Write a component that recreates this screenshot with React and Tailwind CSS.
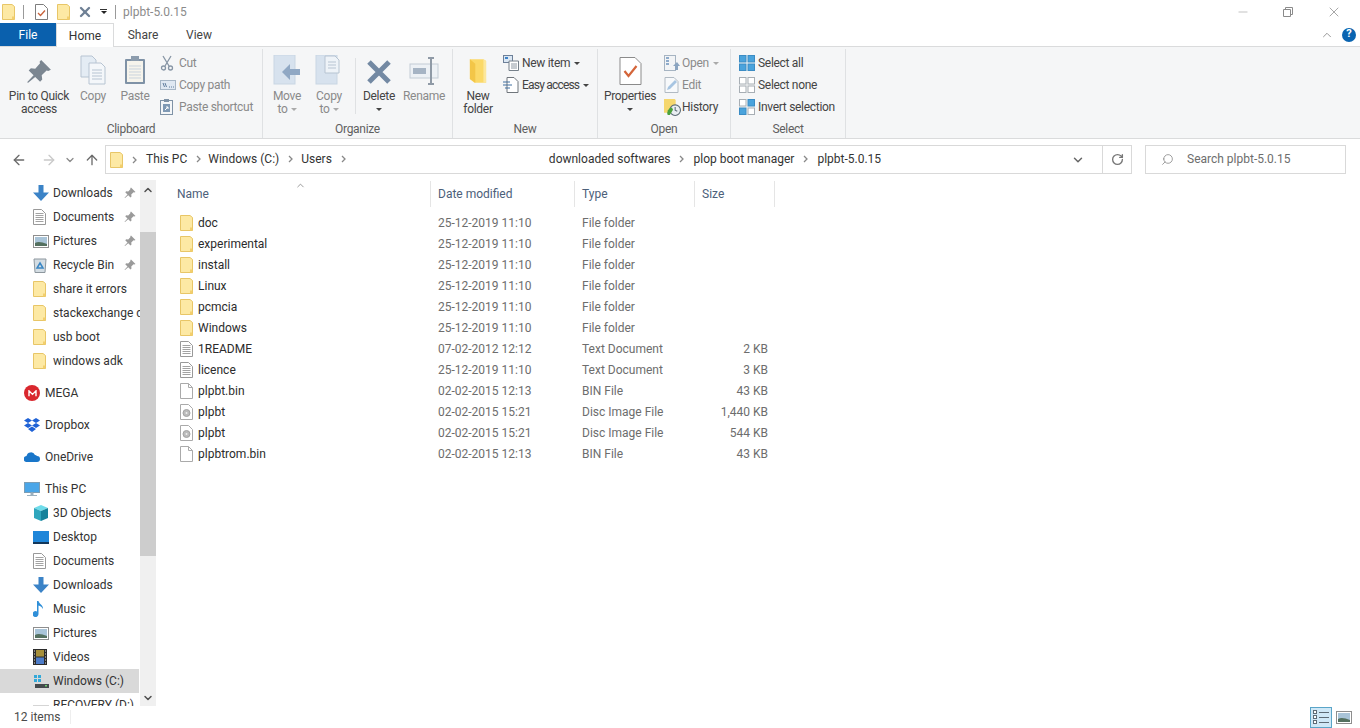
import { ArrowLeft, ArrowRight, ArrowUp, ChevronDown, ChevronUp, RotateCw, Search, Minus, X } from 'lucide-react';

function Folder({ className = 'w-[13px] h-4' }) {
    return (
        <svg viewBox="0 0 13 16" className={className}>
            <path d="M.5.5h9.500l2.500 2v13H.5z" fill="#fde9a4" stroke="#e8c667" />
            <path d="M10 12.500h2.500v3H10z" fill="#f3cf6d" />
        </svg>
    );
}

function DocLines({ className = 'w-[13px] h-4' }) {
    return (
        <svg viewBox="0 0 13 16" className={className} fill="none">
            <path d="M.5.5h8l4 4v11H.5z" fill="#fff" stroke="#999" />
            <path d="M2.500 4.500h8M2.500 6.500h8M2.500 8.500h8M2.500 10.500h8M2.500 12.500h8" stroke="#a3a3a3" />
        </svg>
    );
}

function DocBlank() {
    return (
        <svg viewBox="0 0 13 16" className="w-[13px] h-4" fill="none">
            <path d="M.5.5h8l4 4v11H.5z" fill="#fff" stroke="#aaa" />
            <path d="M8.500.5v4h4" stroke="#aaa" />
        </svg>
    );
}

function DocDisc() {
    return (
        <svg viewBox="0 0 13 16" className="w-[13px] h-4" fill="none">
            <path d="M.5.5h8l4 4v11H.5z" fill="#fff" stroke="#aaa" />
            <circle cx="6.500" cy="9" r="3.500" fill="#bbb" stroke="#a3a3a3" />
            <circle cx="6.500" cy="9" r="1" fill="#eee" />
        </svg>
    );
}

function Pin({ className = 'w-3 h-3', color = '#9a9a9a' }) {
    return (
        <svg viewBox="0 0 24 24" className={className}>
            <path d="M14 1l9 9-2.500 1-1.500-.5-4.500 4.500.5 4-2 2-4.500-4.500L2 22l-1-.5 6-6.500-4.500-4.500 2-2 4 .5L13 4l-.5-1.500z" fill={color} />
        </svg>
    );
}

function DownArrow({ className = 'w-[16px] h-[16px]' }) {
    return (
        <svg viewBox="0 0 16 16" className={className}>
            <path d="M5.500 0h5v7.500H16L8 16 0 7.500h5.500z" fill="#3b83c7" />
        </svg>
    );
}

function PicturesIcon() {
    return (
        <svg viewBox="0 0 16 13" className="w-4 h-[13px]">
            <rect x=".5" y=".5" width="15" height="12" fill="#fff" stroke="#8e8e8e" />
            <rect x="2" y="2" width="12" height="9" fill="#a9c4d8" />
            <path d="M2 8c3-2 7-1 12 1v2H2z" fill="#54705f" />
        </svg>
    );
}

function RecycleIcon() {
    return (
        <svg viewBox="0 0 14 16" className="w-[14px] h-4">
            <path d="M1 2h12l-1 13.500H2z" fill="#d4dde3" stroke="#8d979e" />
            <path d="M7 6l3 5H4z" fill="none" stroke="#3a86c4" strokeWidth="1.500" />
        </svg>
    );
}

function MegaIcon() {
    return (
        <span className="w-4 h-4 rounded-full bg-[#d9272e] flex items-center justify-center">
            <svg viewBox="0 0 10 8" className="w-[9px] h-[7px]" fill="none">
                <path d="M1 7V1l4 4 4-4v6" stroke="#fff" strokeWidth="1.600" />
            </svg>
        </span>
    );
}

function DropboxIcon() {
    return (
        <svg viewBox="0 0 16 15" className="w-4 h-[15px]" fill="#1f62d6">
            <path d="M4 0l4 2.500L4 5 0 2.500zM12 0l4 2.500L12 5 8 2.500zM4 5l4 2.500L4 10 0 7.500zM12 5l4 2.500L12 10 8 7.500zM8 8.500l4 2.500-4 3-4-3z" />
        </svg>
    );
}

function CloudIcon() {
    return (
        <svg viewBox="0 0 16 10" className="w-4 h-[10px]">
            <path d="M3 10a3 3 0 0 1-.500-6A4.500 4.500 0 0 1 11 3a3.500 3.500 0 0 1 2 1A3 3 0 0 1 13 10z" fill="#1976c9" />
        </svg>
    );
}

function MonitorIcon() {
    return (
        <svg viewBox="0 0 16 15" className="w-4 h-[15px]">
            <rect x=".5" y=".5" width="15" height="10" fill="#4aa6e8" stroke="#7b9db5" />
            <path d="M7 11h2v2H7zM3 13.500h10" stroke="#9bb0be" fill="#9bb0be" />
        </svg>
    );
}

function CubeIcon() {
    return (
        <svg viewBox="0 0 16 16" className="w-4 h-4">
            <path d="M8 0l7 3-7 3-7-3z" fill="#6fdcea" />
            <path d="M1 3l7 3v10l-7-3z" fill="#2fa6bd" />
            <path d="M15 3L8 6v10l7-3z" fill="#16829b" />
        </svg>
    );
}

function DesktopIcon() {
    return (
        <svg viewBox="0 0 16 13" className="w-4 h-[13px]">
            <rect width="16" height="13" fill="#1f86d9" />
            <rect y="11" width="16" height="2" fill="#13375a" />
        </svg>
    );
}

function MusicIcon() {
    return (
        <svg viewBox="0 0 12 16" className="w-3 h-4">
            <path d="M4 0h1.500c.5 3 5 4 4.500 8-1-2-2.500-3-4.500-3.500V13a3 3 0 1 1-1.500-2.500z" fill="#2f8fd8" />
        </svg>
    );
}

function VideoIcon() {
    return (
        <svg viewBox="0 0 14 16" className="w-[14px] h-4">
            <rect width="14" height="16" fill="#2b2b2b" />
            <rect x="3" y="1" width="8" height="6.500" fill="#a68f3a" />
            <rect x="3" y="8.500" width="8" height="6.500" fill="#4d7cc9" />
            <path d="M1 2h1M1 5h1M1 8h1M1 11h1M1 14h1M12 2h1M12 5h1M12 8h1M12 11h1M12 14h1" stroke="#ddd" />
        </svg>
    );
}

function DriveIcon() {
    return (
        <svg viewBox="0 0 16 14" className="w-4 h-[14px]">
            <path d="M1 1h3v3H1zM5 1h3v3H5zM1 5h3v3H1zM5 5h3v3H5z" fill="#33a9d9" />
            <rect x="2" y="10" width="14" height="4" fill="#454a4d" />
            <rect x="12" y="11" width="2" height="1.500" fill="#6ed06e" />
        </svg>
    );
}

function PlainDriveIcon() {
    return (
        <svg viewBox="0 0 16 14" className="w-4 h-[14px]">
            <rect x="0" y="7" width="16" height="1" fill="#d5d5d5" />
            <rect x="0" y="8" width="16" height="6" fill="#e8e8e8" />
        </svg>
    );
}

function TitleDoc() {
    return (
        <svg viewBox="0 0 13 16" className="w-[13px] h-4" fill="none">
            <path d="M.5.5h8l4 4v11H.5z" fill="#fff" stroke="#7d7d7d" />
            <path d="M3 9l2.500 2.500L10 6.500" stroke="#c8623a" strokeWidth="1.300" />
        </svg>
    );
}

function CopyIcon() {
    return (
        <svg viewBox="0 0 26 30" className="w-[26px] h-[30px]">
            <path d="M1 1h11l4 4v17H1z" fill="#e4ecf4" stroke="#b7c4d2" />
            <path d="M9 8h12l4 4v17H9z" fill="#f4f7fa" stroke="#b7c4d2" />
            <path d="M12 15h10M12 18h10M12 21h10M12 24h10" stroke="#b7c4d2" />
        </svg>
    );
}

function PasteIcon() {
    return (
        <svg viewBox="0 0 22 30" className="w-[22px] h-[30px]">
            <rect x="1" y="4" width="20" height="25" fill="#7f92a6" rx="1" />
            <rect x="3" y="6" width="16" height="21" fill="#f6f4ec" />
            <path d="M5 11h12M5 14h12M5 17h12M5 20h12M5 23h12" stroke="#c9d3dd" />
            <rect x="7" y="1" width="8" height="5" fill="#8c9cad" />
        </svg>
    );
}

function MoveIcon({ copy }) {
    return (
        <svg viewBox="0 0 28 30" className="w-[28px] h-[30px]">
            <rect x="1" y="0" width="21" height="29" fill="#d7e2ee" stroke="#c9d6e3" />
            {copy ? (
                <g>
                    <path d="M10 1h10l4 4v13H10z" fill="#eef3f8" stroke="#b7c4d2" />
                    <path d="M13 7h8M13 10h8M13 13h8" stroke="#b7c4d2" />
                </g>
            ) : (
                <path d="M27 14H17V9l-8 8 8 8v-5h10z" fill="#90a8c4" />
            )}
        </svg>
    );
}

function BigX() {
    return (
        <svg viewBox="0 0 26 26" className="w-[26px] h-[26px]">
            <path d="M3 3l20 20M23 3L3 23" stroke="#7389a3" strokeWidth="5" />
        </svg>
    );
}

function RenameIcon() {
    return (
        <svg viewBox="0 0 30 28" className="w-[30px] h-7">
            <rect x="1" y="7" width="28" height="14" fill="#edf1f5" stroke="#c3ccd5" />
            <rect x="4" y="11" width="13" height="6" fill="#a6b4c4" />
            <path d="M19 1h6M22 1v26M19 27h6" stroke="#8f9aa6" strokeWidth="2" />
        </svg>
    );
}

function SmallCut() {
    return (
        <svg viewBox="0 0 14 16" className="w-[14px] h-4" fill="none" stroke="#8795a5" strokeWidth="1.300">
            <path d="M3 1l6 10M11 1L5 11" />
            <circle cx="3.500" cy="13" r="2" />
            <circle cx="10.500" cy="13" r="2" />
        </svg>
    );
}

function SmallPath() {
    return (
        <svg viewBox="0 0 16 10" className="w-4 h-[10px]">
            <rect x=".5" y=".5" width="15" height="9" fill="#dfe8f2" stroke="#a6b6c6" />
            <path d="M3 3l1.500 4M5 3l1.500 4" stroke="#5f7d9d" />
            <path d="M9 7h1M11 7h1M13 7h1" stroke="#5f7d9d" />
        </svg>
    );
}

function SmallPasteShortcut() {
    return (
        <svg viewBox="0 0 13 16" className="w-[13px] h-4">
            <rect x=".5" y="1.500" width="12" height="14" fill="#f4f6f8" stroke="#7f92a6" />
            <rect x="4" y="0" width="5" height="3" fill="#7f92a6" />
            <rect x="3" y="5" width="7" height="8" fill="#7f99b4" />
            <path d="M5 11l3-3M6 8h2v2" stroke="#fff" fill="none" />
        </svg>
    );
}

function NewFolderIcon() {
    return (
        <svg viewBox="0 0 20 28" className="w-[18px] h-7">
            <path d="M1 1h15l3 2v24H6l-5-4z" fill="#fbd968" />
            <path d="M1 1l6 5v21l-6-4z" fill="#f3c648" />
            <path d="M16 1l3 2v24h-3z" fill="#fce79c" />
        </svg>
    );
}

function NewItemIcon() {
    return (
        <svg viewBox="0 0 16 16" className="w-4 h-4">
            <rect x=".5" y=".5" width="9" height="7" fill="#dbe7f3" stroke="#6d8099" />
            <rect x="2" y="2" width="3" height="2" fill="#3f83c8" />
            <path d="M6 6h9.500v9.500H6z" fill="#fff" stroke="#76808a" />
            <path d="M8 9h6M8 11h6M8 13h6" stroke="#8e98a2" />
        </svg>
    );
}

function EasyAccessIcon() {
    return (
        <svg viewBox="0 0 16 16" className="w-4 h-4" fill="none">
            <path d="M4 .5h7l4 4v11H4z" fill="#fff" stroke="#70767c" />
            <path d="M0 5h7M0 8h9M2 11h5" stroke="#3f6f9f" />
        </svg>
    );
}

function PropertiesIcon() {
    return (
        <svg viewBox="0 0 22 28" className="w-[23px] h-7" fill="none">
            <path d="M.5.5h15l6 6v21H.5z" fill="#fff" stroke="#8b8b8b" />
            <path d="M5 14l4 5 8-10" stroke="#d4653a" strokeWidth="2.200" />
        </svg>
    );
}

function OpenIcon() {
    return (
        <svg viewBox="0 0 16 16" className="w-4 h-4">
            <rect x=".5" y=".5" width="11" height="15" fill="#f2f4f6" stroke="#a6b4c2" />
            <path d="M2 3h3M2 6h3M2 9h3" stroke="#6d93bd" strokeWidth="1.500" />
            <path d="M13 7l3 4h-2v4h-3v-4H9z" fill="#8aa4c0" />
        </svg>
    );
}

function EditIcon() {
    return (
        <svg viewBox="0 0 16 16" className="w-4 h-4">
            <path d="M1 .5h9l4 4v11H1z" fill="#f7f9fb" stroke="#b1bac3" />
            <path d="M3 13l1-3 7-7 2 2-7 7z" fill="#a7c5e2" />
        </svg>
    );
}

function HistoryIcon() {
    return (
        <svg viewBox="0 0 16 16" className="w-[17px] h-[17px]">
            <path d="M0 0h10l1 1v12H0z" fill="#f5d76e" />
            <circle cx="10.500" cy="10.500" r="5" fill="#e9eef2" stroke="#5a6a74" />
            <path d="M10.500 7.500v3l2 1" stroke="#5a6a74" fill="none" />
            <path d="M3.500 15a5 5 0 0 1 4-7l1 2-3 5z" fill="#4aa13c" />
        </svg>
    );
}

function SelectIcon({ on }) {
    // on: which cells of the 2x2 grid are filled blue
    const cells = [[0, 0], [8.5, 0], [0, 8.5], [8.5, 8.5]];
    return (
        <svg viewBox="0 0 16 16" className="w-4 h-4">
            {cells.map(([x, y], i) => (
                <rect key={i} x={x + 0.5} y={y + 0.5} width="6.500" height="6.500" fill={on[i] ? '#4aa3dc' : '#fff'} stroke={on[i] ? '#3b8cc4' : '#a7aeb4'} />
            ))}
        </svg>
    );
}

function Caret({ color = '#444' }) {
    return (
        <svg viewBox="0 0 6 3" className="w-[6px] h-[3px]">
            <path d="M0 0h6L3 3z" fill={color} />
        </svg>
    );
}

function BigButton({ icon, label, sub, caret, width, muted }) {
    return (
        <div className={`flex flex-col items-center shrink-0 ${width}`}>
            <div className="h-[33px] flex items-end justify-center">{icon}</div>
            <span className={`mt-[5px] leading-[13px] whitespace-nowrap ${muted ? 'text-[#8a8a8a]' : 'text-[#444]'}`}>{label}</span>
            {sub && (
                <span className={`leading-[13px] whitespace-nowrap flex items-center gap-[3px] ${muted ? 'text-[#8a8a8a]' : 'text-[#444]'}`}>
                    {sub}
                    {caret && <Caret color="#aaa" />}
                </span>
            )}
            {!sub && caret && (
                <span className="h-[13px] flex items-center">
                    <Caret />
                </span>
            )}
        </div>
    );
}

function SmallButton({ icon, label, muted, caret, iconW = 'w-[19px]' }) {
    return (
        <div className={`h-[22px] flex items-center whitespace-nowrap ${muted ? 'text-[#8a8a8a]' : 'text-[#444]'}`}>
            <span className={`${iconW} flex justify-start`}>{icon}</span>
            {label}
            {caret && (
                <span className="ml-[4px]">
                    <Caret color={muted ? '#aaa' : '#444'} />
                </span>
            )}
        </div>
    );
}

function RibbonGroup({ title, width, children }) {
    return (
        <div className={`${width} shrink-0 h-full flex flex-col border-r border-[#dfe1e3]`}>
            <div className="flex-1 flex pt-[3px] min-h-0">{children}</div>
            <div className="h-[17px] text-center leading-[17px] text-[#5f5f5f]">{title}</div>
        </div>
    );
}

const navTop = [
    { icon: <DownArrow />, label: 'Downloads', pin: true },
    { icon: <DocLines />, label: 'Documents', pin: true },
    { icon: <PicturesIcon />, label: 'Pictures', pin: true },
    { icon: <RecycleIcon />, label: 'Recycle Bin', pin: true },
    { icon: <Folder />, label: 'share it errors' },
    { icon: <Folder />, label: 'stackexchange downloads' },
    { icon: <Folder />, label: 'usb boot' },
    { icon: <Folder />, label: 'windows adk' },
];

const navPc = [
    { icon: <CubeIcon />, label: '3D Objects' },
    { icon: <DesktopIcon />, label: 'Desktop' },
    { icon: <DocLines />, label: 'Documents' },
    { icon: <DownArrow />, label: 'Downloads' },
    { icon: <MusicIcon />, label: 'Music' },
    { icon: <PicturesIcon />, label: 'Pictures' },
    { icon: <VideoIcon />, label: 'Videos' },
    { icon: <DriveIcon />, label: 'Windows (C:)', selected: true },
    { icon: <PlainDriveIcon />, label: 'RECOVERY (D:)' },
];

const files = [
    ['folder', 'doc', '25-12-2019 11:10', 'File folder', ''],
    ['folder', 'experimental', '25-12-2019 11:10', 'File folder', ''],
    ['folder', 'install', '25-12-2019 11:10', 'File folder', ''],
    ['folder', 'Linux', '25-12-2019 11:10', 'File folder', ''],
    ['folder', 'pcmcia', '25-12-2019 11:10', 'File folder', ''],
    ['folder', 'Windows', '25-12-2019 11:10', 'File folder', ''],
    ['text', '1README', '07-02-2012 12:12', 'Text Document', '2 KB'],
    ['text', 'licence', '25-12-2019 11:10', 'Text Document', '3 KB'],
    ['blank', 'plpbt.bin', '02-02-2015 12:13', 'BIN File', '43 KB'],
    ['disc', 'plpbt', '02-02-2015 15:21', 'Disc Image File', '1,440 KB'],
    ['disc', 'plpbt', '02-02-2015 15:21', 'Disc Image File', '544 KB'],
    ['blank', 'plpbtrom.bin', '02-02-2015 12:13', 'BIN File', '43 KB'],
];

function FileIcon({ kind }) {
    if (kind === 'folder') return <Folder />;
    if (kind === 'text') return <DocLines />;
    if (kind === 'disc') return <DocDisc />;
    return <DocBlank />;
}

function NavRow({ item }) {
    return (
        <div className={`h-6 shrink-0 flex items-center pl-[33px] ${item.selected ? 'bg-[#d9d9d9] mr-px' : ''}`}>
            <span className="w-[20px] shrink-0 flex">{item.icon}</span>
            <span className="whitespace-nowrap overflow-hidden flex-1 text-[#333]">{item.label}</span>
            {item.pin && (
                <span className="w-[16px] shrink-0">
                    <Pin />
                </span>
            )}
        </div>
    );
}

function NavTop({ icon, label }) {
    return (
        <div className="h-6 shrink-0 flex items-center pl-[24px]">
            <span className="w-[21px] shrink-0 flex">{icon}</span>
            <span className="text-[#333]">{label}</span>
        </div>
    );
}

function Crumb({ label, className = '' }) {
    return (
        <span className={`flex items-center ${className}`}>
            <span className="text-[#333]">{label}</span>
            <svg viewBox="0 0 5 8" className="w-[5px] h-2 mx-[9px]" fill="none">
                <path d="M1 1l3 3-3 3" stroke="#888" strokeWidth="1.300" />
            </svg>
        </span>
    );
}

export default function App() {
    return (
        <div className="w-[1360px] h-[728px] overflow-hidden bg-white flex flex-col text-[12px] font-['Roboto','Liberation_Sans',sans-serif]">
            {/* Title bar */}
            <div className="h-[23px] shrink-0 flex items-center pl-[2px] relative">
                <Folder />
                <span className="w-px h-[14px] bg-[#9a9a9a] ml-[8px]" />
                <span className="ml-[11px]">
                    <TitleDoc />
                </span>
                <span className="ml-[9px]">
                    <Folder />
                </span>
                <X className="ml-[7px] w-4 h-4 text-[#6f8095]" strokeWidth={3.5} />
                <span className="ml-[7px] flex flex-col items-center gap-[1px]">
                    <span className="w-[7px] h-px bg-[#333]" />
                    <Caret color="#222" />
                </span>
                <span className="w-px h-[14px] bg-[#9a9a9a] ml-[8px]" />
                <span className="ml-[7px] text-[#8b8b8b]">plpbt-5.0.15</span>
                <span className="ml-auto flex items-center">
                    <Minus className="w-[14px] h-[14px] text-[#9a9a9a]" strokeWidth={1} />
                    <svg viewBox="0 0 10 10" className="w-[10px] h-[10px] ml-[33px]" fill="none" stroke="#8a8a8a">
                        <path d="M2.500 2.500V.5h7v7h-2M.5 2.500h7v7h-7z" />
                    </svg>
                    <X className="w-[16px] h-[16px] ml-[33px] mr-[18px] text-[#7a7a7a]" strokeWidth={1} />
                </span>
            </div>

            {/* Tabs */}
            <div className="h-[24px] shrink-0 flex items-stretch border-b border-[#dadbdc] relative">
                <div className="w-[56px] h-[23px] bg-[#0a60ad] text-white flex items-center justify-center">File</div>
                <div className="w-[58px] h-[24px] bg-white border-x border-t border-[#dadbdc] flex items-center justify-center text-[#333]">Home</div>
                <div className="w-[58px] flex items-center justify-center text-[#444]">Share</div>
                <div className="w-[54px] flex items-center justify-center text-[#444]">View</div>
                <div className="ml-auto flex items-center pr-[4px]">
                    <ChevronUp className="w-[14px] h-[14px] text-[#8a8a8a]" strokeWidth={1.5} />
                    <span className="ml-[8px] w-[14px] h-[14px] rounded-full bg-[#0a64b0] text-white flex items-center justify-center text-[11px] font-bold">?</span>
                </div>
            </div>

            {/* Ribbon */}
            <div className="h-[92px] shrink-0 bg-[#f5f6f7] border-b border-[#dadbdc] flex pt-[2px] tracking-[-0.3px]">
                <RibbonGroup title="Clipboard" width="w-[263px]">
                    <div className="w-[5px]" />
                    <BigButton width="w-[68px]" icon={<Pin className="w-[26px] h-[26px]" color="#7b8691" />} label="Pin to Quick" sub="access" />
                    <BigButton width="w-[40px]" icon={<CopyIcon />} label="Copy" muted />
                    <div className="w-[2px]" />
                    <BigButton width="w-[40px]" icon={<PasteIcon />} label="Paste" muted />
                    <div className="ml-[5px] flex flex-col">
                        <SmallButton icon={<SmallCut />} label="Cut" muted />
                        <SmallButton icon={<SmallPath />} label="Copy path" muted />
                        <SmallButton icon={<SmallPasteShortcut />} label="Paste shortcut" muted />
                    </div>
                </RibbonGroup>
                <RibbonGroup title="Organize" width="w-[190px]">
                    <div className="w-[3px]" />
                    <BigButton width="w-[42px]" icon={<MoveIcon />} label="Move" sub="to" caret muted />
                    <BigButton width="w-[42px]" icon={<MoveIcon copy />} label="Copy" sub="to" caret muted />
                    <span className="w-px h-[56px] bg-[#dfe1e3] ml-[5px] mt-[6px]" />
                    <BigButton width="w-[46px]" icon={<BigX />} label="Delete" caret />
                    <BigButton width="w-[44px]" icon={<RenameIcon />} label="Rename" muted />
                </RibbonGroup>
                <RibbonGroup title="New" width="w-[145px]">
                    <BigButton width="w-[50px]" icon={<NewFolderIcon />} label="New" sub="folder" />
                    <div className="flex flex-col">
                        <SmallButton icon={<NewItemIcon />} label="New item" caret />
                        <SmallButton icon={<EasyAccessIcon />} label={<span className="tracking-[-0.8px]">Easy access</span>} caret />
                    </div>
                </RibbonGroup>
                <RibbonGroup title="Open" width="w-[133px]">
                    <BigButton width="w-[64px]" icon={<PropertiesIcon />} label="Properties" caret />
                    <div className="ml-[2px] flex flex-col">
                        <SmallButton icon={<OpenIcon />} label="Open" muted caret iconW="w-[18px]" />
                        <SmallButton icon={<EditIcon />} label="Edit" muted iconW="w-[18px]" />
                        <SmallButton icon={<HistoryIcon />} label="History" iconW="w-[18px]" />
                    </div>
                </RibbonGroup>
                <RibbonGroup title="Select" width="w-[115px]">
                    <div className="pl-[8px] flex flex-col">
                        <SmallButton icon={<SelectIcon on={[1, 1, 1, 1]} />} label="Select all" />
                        <SmallButton icon={<SelectIcon on={[0, 0, 0, 0]} />} label="Select none" />
                        <SmallButton icon={<SelectIcon on={[0, 1, 1, 0]} />} label="Invert selection" />
                    </div>
                </RibbonGroup>
            </div>

            {/* Address bar */}
            <div className="h-[41px] shrink-0 flex items-center">
                <ArrowLeft className="ml-[11px] w-4 h-4 text-[#6b6b6b]" strokeWidth={2} />
                <ArrowRight className="ml-[14px] w-4 h-4 text-[#c9c9c9]" strokeWidth={2} />
                <ChevronDown className="ml-[7px] w-[12px] h-[12px] text-[#8a8a8a]" strokeWidth={2.5} />
                <ArrowUp className="ml-[8px] w-4 h-4 text-[#6b6b6b]" strokeWidth={2} />
                <div className="ml-[5px] w-[1027px] h-[29px] border border-[#d9d9d9] flex items-center pl-[4px]">
                    <Folder />
                    <svg viewBox="0 0 5 8" className="w-[5px] h-2 ml-[9px] mr-[9px]" fill="none">
                        <path d="M1 1l3 3-3 3" stroke="#888" strokeWidth="1.300" />
                    </svg>
                    <span className="flex items-center pb-[2px]">
                        <Crumb label="This PC" />
                        <Crumb label="Windows (C:)" className="-ml-[2px]" />
                        <Crumb label="Users" className="-ml-[1px]" />
                        <Crumb label="downloaded softwares" className="ml-[194px]" />
                        <Crumb label="plop boot manager" />
                        <span className="text-[#333]">plpbt-5.0.15</span>
                    </span>
                    <span className="ml-auto w-[30px] h-full flex items-center justify-start">
                        <ChevronDown className="w-[14px] h-[14px] text-[#666] -ml-[1px]" strokeWidth={2.5} />
                    </span>
                    <span className="w-[29px] h-full border-l border-[#d9d9d9] flex items-center justify-center">
                        <RotateCw className="w-[13px] h-[13px] text-[#777]" strokeWidth={2.5} />
                    </span>
                </div>
                <div className="ml-[13px] w-[201px] h-[29px] border border-[#d9d9d9] flex items-center pl-[15px] text-[#6d6d6d]">
                    <Search className="w-[13px] h-[13px] text-[#8a8a8a] -scale-x-100" strokeWidth={1.5} />
                    <span className="ml-[13px] pb-[2px]">Search plpbt-5.0.15</span>
                </div>
            </div>

            {/* Nav pane and file list */}
            <div className="flex-1 min-h-0 flex">
                <div className="w-[140px] shrink-0 flex flex-col overflow-hidden pt-px">
                    {navTop.map((item) => (
                        <NavRow key={item.label} item={item} />
                    ))}
                    <div className="h-2 shrink-0" />
                    <NavTop icon={<MegaIcon />} label="MEGA" />
                    <div className="h-2 shrink-0" />
                    <NavTop icon={<DropboxIcon />} label="Dropbox" />
                    <div className="h-2 shrink-0" />
                    <NavTop icon={<CloudIcon />} label="OneDrive" />
                    <div className="h-2 shrink-0" />
                    <NavTop icon={<MonitorIcon />} label="This PC" />
                    {navPc.map((item) => (
                        <NavRow key={item.label} item={item} />
                    ))}
                </div>

                {/* Scrollbar */}
                <div className="w-[16px] shrink-0 bg-[#f0f0f0] flex flex-col items-center">
                    <div className="h-[17px] mt-px shrink-0 flex items-center justify-center">
                        <ChevronUp className="w-[12px] h-[12px] text-[#505050]" strokeWidth={3} />
                    </div>
                    <div className="h-[34px] shrink-0" />
                    <div className="w-full h-[324px] shrink-0 bg-[#cdcdcd]" />
                    <div className="flex-1" />
                    <div className="h-[17px] shrink-0 flex items-center justify-center">
                        <ChevronDown className="w-[12px] h-[12px] text-[#505050]" strokeWidth={3} />
                    </div>
                </div>

                <div className="flex-1 min-w-0 pl-[15px] relative">
                    <ChevronUp className="absolute left-[139px] top-0 w-[11px] h-[11px] text-[#6f6f6f]" strokeWidth={1.5} />
                    <div className="flex h-[26px] text-[#4c607a] items-center mt-[1px]">
                        <div className="w-[260px] h-full flex items-center pl-[6px] border-r border-[#e5e5e5]">Name</div>
                        <div className="w-[144px] h-full flex items-center pl-[7px] border-r border-[#e5e5e5]">Date modified</div>
                        <div className="w-[120px] h-[26px] flex items-center pl-[7px] border-r border-[#e5e5e5]">Type</div>
                        <div className="w-[80px] h-full flex items-center pl-[7px] border-r border-[#e5e5e5]">Size</div>
                    </div>
                    <div className="mt-[5px] flex flex-col">
                        {files.map(([kind, name, date, type, size], i) => (
                            <div key={i} className="h-[21px] flex items-center text-[#6d6d6d]">
                                <div className="w-[260px] flex items-center pl-[9px]">
                                    <span className="w-[18px] flex shrink-0">
                                        <FileIcon kind={kind} />
                                    </span>
                                    <span className="text-[#2b2b2b] whitespace-nowrap">{name}</span>
                                </div>
                                <div className="w-[144px] pl-[7px] whitespace-nowrap">{date}</div>
                                <div className="w-[120px] pl-[7px] whitespace-nowrap">{type}</div>
                                <div className="w-[73px] text-right whitespace-nowrap">{size}</div>
                            </div>
                        ))}
                    </div>
                </div>
            </div>

            {/* Status bar */}
            <div className="h-[22px] shrink-0 bg-white flex items-center pl-[14px] text-[#4a4a4a]">
                <span>12 items</span>
                <span className="w-px h-[14px] bg-[#eeeeee] ml-[10px]" />
                <span className="ml-auto w-[22px] h-[21px] bg-[#cfe8f7] border border-[#5aa5c8] flex flex-col items-center justify-center gap-[1px]">
                    {[0, 1, 2].map((n) => (
                        <span key={n} className="flex items-center gap-[2px]">
                            <span className="w-[4px] h-[4px] bg-white border border-[#5d6b76]" />
                            <span className="w-[10px] h-px bg-[#5d6b76]" />
                        </span>
                    ))}
                </span>
                <span className="ml-[4px] mr-[8px] flex">
                    <PicturesIcon />
                </span>
            </div>
        </div>
    );
}
